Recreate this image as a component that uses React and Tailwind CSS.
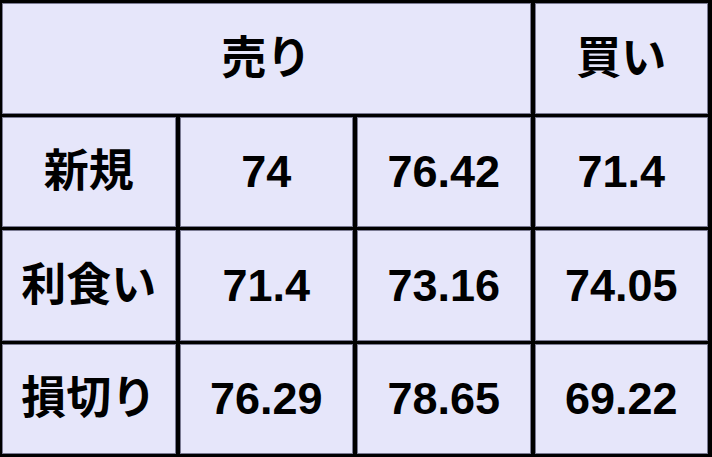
const rows = [
  ["新規", "74", "76.42", "71.4"],
  ["利食い", "71.4", "73.16", "74.05"],
  ["損切り", "76.29", "78.65", "69.22"],
]

function Cell({ children, className = "" }) {
  return (
    <div
      className={`flex items-center justify-center bg-[#e6e6fa] border border-[#7a7a92] text-black font-bold text-[45px] leading-none ${className}`}
    >
      {children}
    </div>
  )
}

export default function App() {
  return (
    <div
      className="w-[712px] h-[457px] bg-black pt-[3px] pl-[2px] pr-[4px] pb-[3px] grid grid-cols-4 grid-rows-4 gap-x-[4px] gap-y-[3px]"
      style={{ fontFamily: '"Liberation Sans", "Noto Sans CJK JP", sans-serif' }}
    >
      <Cell className="col-span-3">売り</Cell>
      <Cell>買い</Cell>
      {rows.map((row) =>
        row.map((v, i) => <Cell key={row[0] + i}>{v}</Cell>)
      )}
    </div>
  )
}
